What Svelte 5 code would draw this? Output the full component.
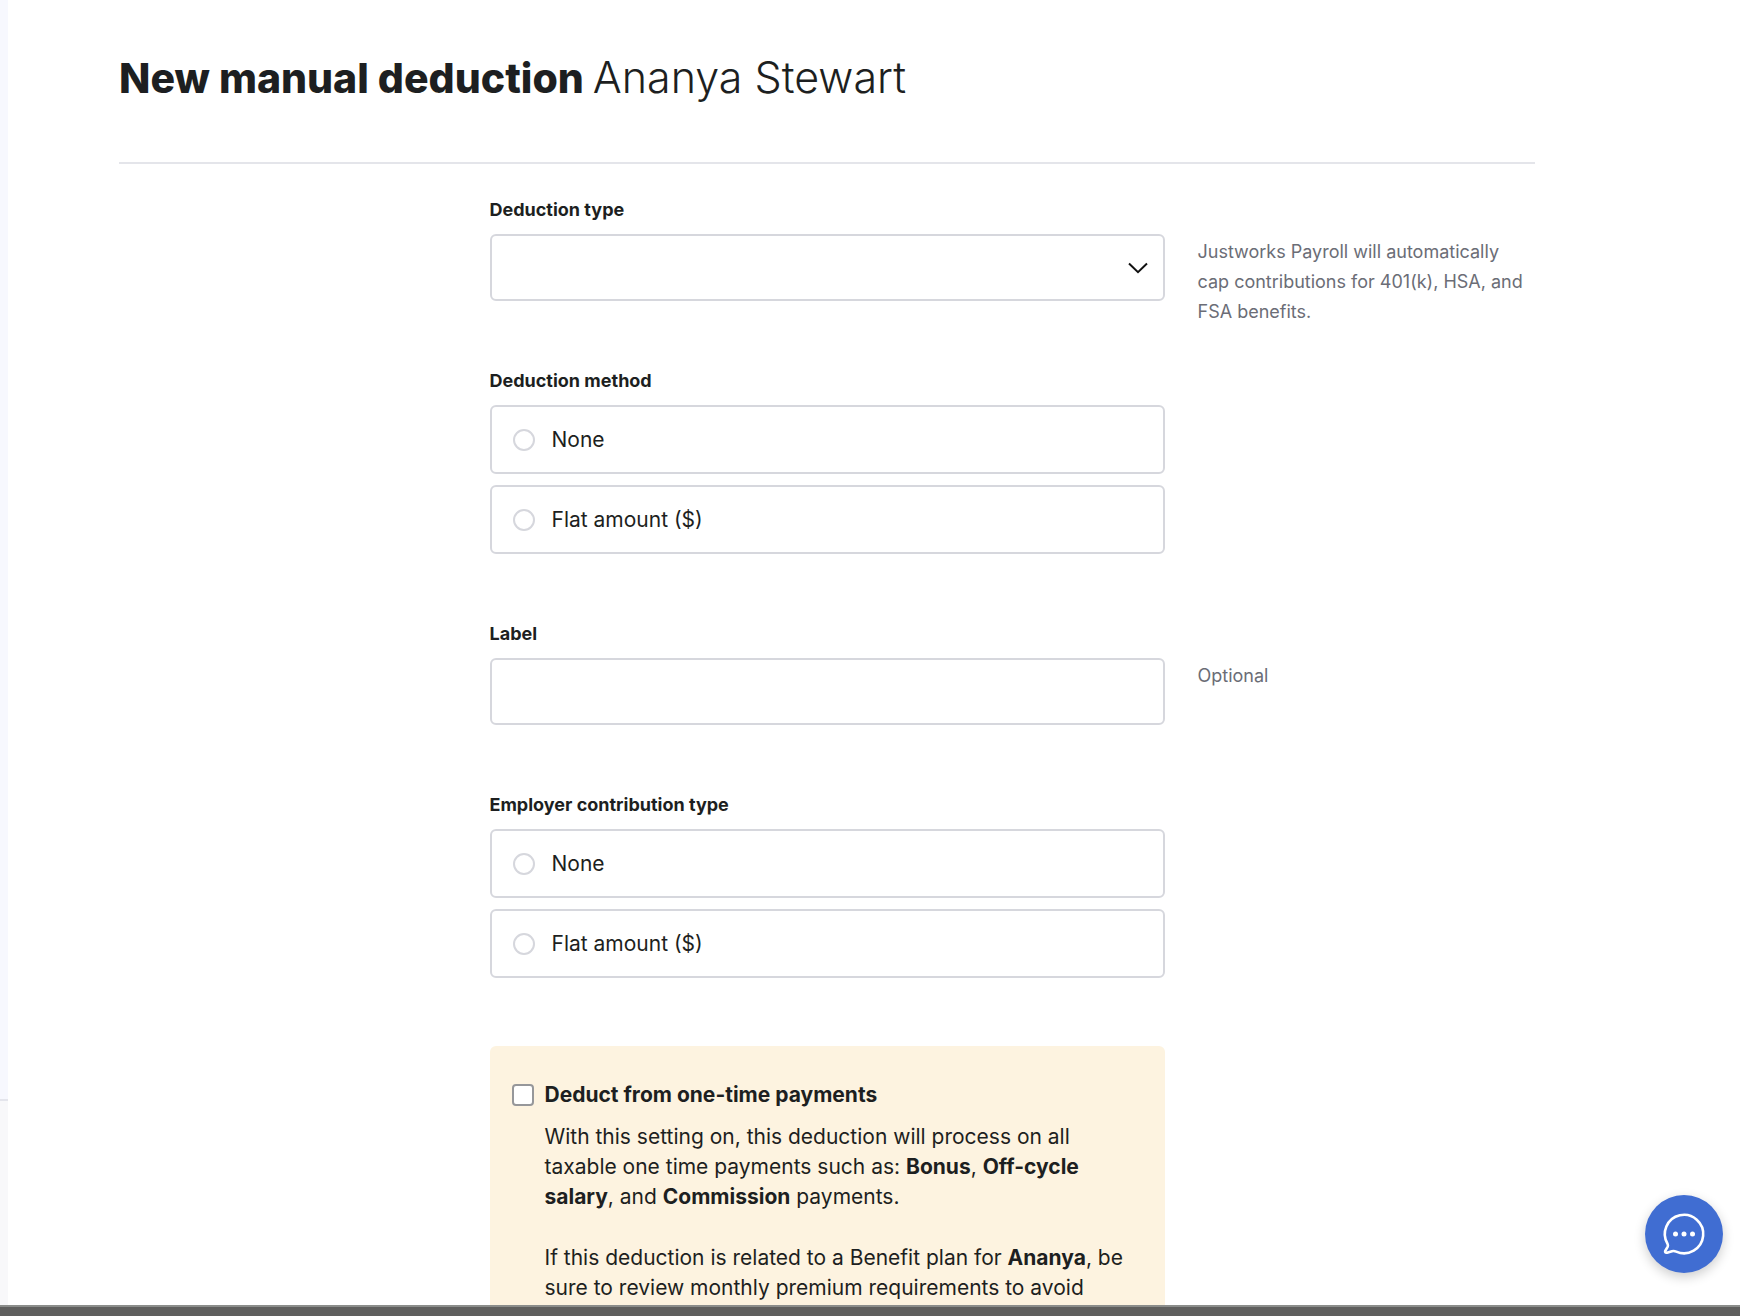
<script lang="ts">
  const employee = { first: 'Ananya', last: 'Stewart' }

  const choices = [
    { value: 'none', label: 'None' },
    { value: 'flat', label: 'Flat amount ($)' }
  ]

  const deductionTypes = ['401(k)', 'HSA', 'FSA']

  let deductionType = $state('')
  let method = $state('')
  let label = $state('')
  let contribution = $state('')
  let oneTime = $state(false)
</script>

<svelte:head>
  <title>New manual deduction</title>
</svelte:head>

{#snippet radios(name: string, selected: string, onpick: (value: string) => void)}
  <div class="choices">
    {#each choices as choice (choice.value)}
      <label class="choice">
        <input
          type="radio"
          {name}
          value={choice.value}
          checked={selected === choice.value}
          onchange={() => onpick(choice.value)}
        />
        <span>{choice.label}</span>
      </label>
    {/each}
  </div>
{/snippet}

<div class="window">
  <div class="page">
    <aside class="sidebar">
      <div class="sidebar-nav"></div>
      <div class="sidebar-footer"></div>
    </aside>

    <main>
      <header>
        <h1>New manual deduction <span>{employee.first} {employee.last}</span></h1>
      </header>

      <form onsubmit={(e) => e.preventDefault()}>
        <div class="field">
          <label class="title" for="deduction-type">Deduction type</label>
          <div class="select">
            <select id="deduction-type" bind:value={deductionType}>
              <option value=""></option>
              {#each deductionTypes as type}
                <option value={type}>{type}</option>
              {/each}
            </select>
            <svg viewBox="0 0 20 12" width="20" height="12" aria-hidden="true">
              <path d="M1 1.5 L10 10.2 L19 1.5" />
            </svg>
          </div>
          <p class="help">
            Justworks Payroll will automatically cap contributions for 401(k), HSA, and FSA benefits.
          </p>
        </div>

        <fieldset class="field">
          <legend class="title">Deduction method</legend>
          {@render radios('method', method, (v) => (method = v))}
        </fieldset>

        <div class="field">
          <label class="title" for="label">Label</label>
          <input id="label" class="text" type="text" bind:value={label} />
          <p class="help">Optional</p>
        </div>

        <fieldset class="field">
          <legend class="title">Employer contribution type</legend>
          {@render radios('contribution', contribution, (v) => (contribution = v))}
        </fieldset>

        <div class="field">
          <div class="notice">
            <input id="one-time" type="checkbox" bind:checked={oneTime} />
            <label for="one-time">Deduct from one-time payments</label>
            <div class="notice-text">
              <p>
                With this setting on, this deduction will process on all taxable one time payments
                such as: <strong>Bonus</strong>, <strong>Off-cycle salary</strong>, and
                <strong>Commission</strong> payments.
              </p>
              <p>
                If this deduction is related to a Benefit plan for
                <strong>{employee.first}</strong>, be sure to review monthly premium requirements to
                avoid
              </p>
            </div>
          </div>
        </div>
      </form>
    </main>
  </div>

  <div class="edge"></div>

  <button class="chat" type="button" aria-label="Open chat">
    <svg viewBox="0 0 78 78" width="78" height="78" aria-hidden="true">
      <path
        d="M22.6 49 A19.2 19.2 0 1 1 31.2 56.6 C29.8 56 28.6 55.7 27 56.2 L22 57.7 C20.4 58.1 19.8 57.2 20.2 56 L22.6 51.8 C23.1 50.8 23.1 50 22.6 49 Z"
      />
      <circle cx="30.5" cy="39" r="2.5" />
      <circle cx="39" cy="39" r="2.5" />
      <circle cx="47.5" cy="39" r="2.5" />
    </svg>
  </button>
</div>

<style>
  :global(body) {
    background: #fff;
    color: #1d1f21;
    font-family: Inter, 'Liberation Sans', sans-serif;
  }

  .window {
    display: flex;
    flex-direction: column;
    height: 100vh;
    overflow: hidden;
  }

  .page {
    display: flex;
    flex: 1;
    min-height: 0;
    overflow: hidden;
  }

  .sidebar {
    display: flex;
    flex-direction: column;
    width: 8px;
    flex-shrink: 0;
    background: #f7f8fe;
  }

  .sidebar-nav { flex: 1; }

  .sidebar-footer {
    height: 204px;
    border-top: 2px solid #e4e5ec;
    background: #f8f8fa;
  }

  main {
    flex: 1;
    min-width: 0;
    padding: 47px 205px 0 111px;
  }

  header {
    padding-bottom: 54px;
    border-bottom: 2px solid #e4e5ea;
  }

  h1 {
    margin: 0;
    font-size: 41px;
    font-weight: 800;
    line-height: 60px;
  }

  h1 span {
    font-size: 43px;
    font-weight: 300;
  }

  form {
    display: flex;
    flex-direction: column;
    gap: 68px;
    padding-top: 34px;
  }

  .field {
    display: grid;
    grid-template-columns: 1fr 2fr 1fr;
    column-gap: 33px;
    min-width: 0;
    margin: 0;
    padding: 0;
    border: 0;
  }

  .field > * { grid-column: 2; }

  .title {
    padding: 0;
    margin-bottom: 12px;
    font-size: 18px;
    font-weight: 700;
    line-height: 24px;
  }

  /* a legend stays out of the grid, so it is floated back in */
  legend.title {
    float: left;
  }

  .field > .help {
    grid-column: 3;
    height: 64px;
    margin: 3px 0 0;
    color: #6b6d76;
    font-size: 18px;
    line-height: 30px;
  }

  .select {
    position: relative;
    display: flex;
  }

  .select svg {
    position: absolute;
    top: 50%;
    right: 17px;
    margin-top: -6px;
    fill: none;
    stroke: #111;
    stroke-width: 2;
    pointer-events: none;
  }

  select,
  .text {
    width: 100%;
    height: 67px;
    box-sizing: border-box;
    padding: 0 22px;
    appearance: none;
    border: 2px solid #d6d7dd;
    border-radius: 6px;
    background: #fff;
    color: inherit;
    font: inherit;
    font-size: 21px;
  }

  .choices {
    display: flex;
    flex-direction: column;
    gap: 11px;
  }

  .choice {
    display: flex;
    align-items: center;
    gap: 17px;
    height: 65px;
    padding: 0 21px;
    border: 2px solid #d6d7dd;
    border-radius: 6px;
    font-size: 21px;
    cursor: pointer;
  }

  .choice input {
    width: 22px;
    height: 22px;
    margin: 0;
    appearance: none;
    border: 2px solid #d6d7dd;
    border-radius: 50%;
    background: #fff;
  }

  .choice input:checked { border: 7px solid #406dd2; }

  .notice {
    display: grid;
    grid-template-columns: 22px 1fr;
    column-gap: 11px;
    align-items: center;
    padding: 34px 22px 22px;
    border-radius: 6px;
    background: #fdf3e0;
    font-size: 21px;
    line-height: 30px;
  }

  .notice input {
    width: 22px;
    height: 22px;
    margin: 0;
    appearance: none;
    border: 2px solid #96979a;
    border-radius: 4px;
    background: #fff;
  }

  .notice input:checked { background: #406dd2; }

  .notice label,
  .notice strong { font-weight: 700; }

  .notice-text {
    grid-column: 2;
    margin-top: 12px;
  }

  .notice-text p { margin: 0 0 31px; }

  .edge {
    height: 9px;
    border-top: 2px solid #8b8d8b;
    background: #5f5f5e;
  }

  .chat {
    position: fixed;
    right: 17px;
    bottom: 43px;
    width: 78px;
    height: 78px;
    padding: 0;
    border: 0;
    border-radius: 50%;
    background: #406dd2;
    box-shadow: 0 4px 12px rgba(0, 0, 0, 0.2);
    cursor: pointer;
  }

  .chat svg { display: block; }

  .chat path {
    fill: none;
    stroke: #fff;
    stroke-width: 2.6;
    stroke-linejoin: round;
  }

  .chat circle { fill: #fff; }
</style>
